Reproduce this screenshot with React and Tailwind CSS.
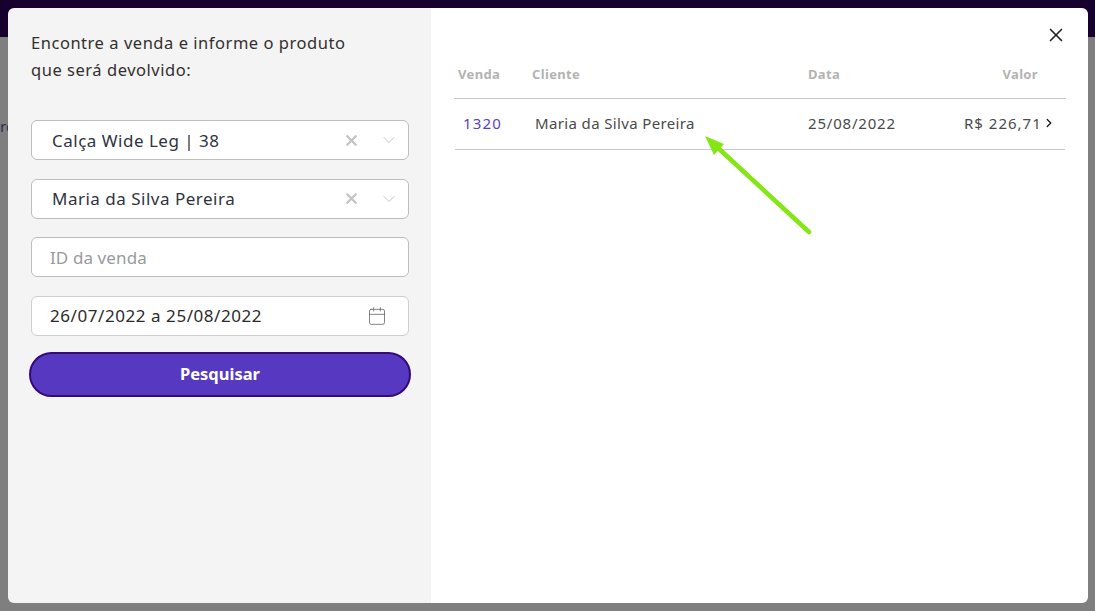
import { X, ChevronDown, ChevronRight, Calendar } from 'lucide-react'

const font = { fontFamily: '"Noto Sans", "Lato", sans-serif' }

// Select with clear + chevron icons
function SelectBox({ value }) {
  return (
    <div className="flex h-10 items-center rounded-[6px] border border-[#bdbdbd] bg-white pl-[20px] pr-[9px]">
      <span className="flex-1 text-[17px] leading-none tracking-[0.5px] text-[#2f3340]">{value}</span>
      <X size={17} strokeWidth={3.4} className="mr-[19px] text-[#c4c4c4]" />
      <ChevronDown size={20} strokeWidth={1.2} className="text-[#c4c4c4]" />
    </div>
  )
}

function Filters() {
  return (
    <aside className="w-[423px] shrink-0 bg-[#f4f4f4] pl-[23px] pr-[22px] pt-[21px]">
      <p className="text-[16.5px] leading-[27px] tracking-[0.53px] text-[#33302e]">
        Encontre a venda e informe o produto
        <br />
        que será devolvido:
      </p>
      <div className="mt-[37px] flex flex-col gap-[18.67px]">
        <SelectBox value="Calça Wide Leg | 38" />
        <SelectBox value="Maria da Silva Pereira" />
        <div className="flex h-10 items-center rounded-[6px] border border-[#bdbdbd] bg-white pl-[18px] text-[17px] leading-none tracking-[0.1px] text-[#9a9a9a]">
          ID da venda
        </div>
        <div className="flex h-10 items-center justify-between rounded-[6px] border border-[#cfcfcf] bg-white pl-[18px] pr-[21px] text-[17px] leading-none tracking-[0.56px] text-[#2b2b2b]">
          <span>26/07/2022 a 25/08/2022</span>
          <Calendar size={20} strokeWidth={1} className="text-[#6b6b6b]" />
        </div>
      </div>
      <button className="-mx-[2px] mt-[16px] block h-[45px] w-[382px] rounded-full border-2 border-[#36087a] bg-[#5639c0] text-[16.5px] font-bold text-white">
        Pesquisar
      </button>
    </aside>
  )
}

function SalesTable() {
  return (
    <section className="relative flex-1 bg-white">
      <button className="absolute right-[21px] top-[16px] text-[#222]">
        <X size={22} strokeWidth={1.8} />
      </button>
      <div className="ml-[23px] mr-[22px] pt-[57px]">
        <div className="flex h-[34px] items-start border-b border-[#c9c9c9] text-[13px] font-bold tracking-[0.35px] text-[#b3b3b3]">
          <span className="w-[75px] pl-[4px]">Venda</span>
          <span className="w-[275px] pl-[3px]">Cliente</span>
          <span className="w-[130px] pl-[4px]">Data</span>
          <span className="w-[104px] text-right">Valor</span>
        </div>
        <div className="mx-[1px] flex h-[51px] items-center border-b border-[#c9c9c9] pb-[2px] text-[15px] text-[#4a4a4a]">
          <span className="w-[80px] pl-[8px] tracking-[1.2px] text-[#5a3fcb]">1320</span>
          <span className="w-[273px] tracking-[0.36px]">Maria da Silva Pereira</span>
          <span className="w-[156px] tracking-[0.8px]">25/08/2022</span>
          <span className="w-[80px] whitespace-nowrap tracking-[1px]">R$ 226,71</span>
          <ChevronRight size={14} strokeWidth={2.4} className="-ml-[2px] text-[#222]" />
        </div>
      </div>
    </section>
  )
}

export default function App() {
  return (
    <div className="relative h-[611px] w-[1095px] overflow-hidden bg-[#7f7f7f]" style={font}>
      <div className="h-[37px] bg-[#16002e]" />
      <p className="mt-[78px] text-[15px] text-[#22304a]">ro</p>

      {/* modal sits on top of the dimmed page */}
      <div className="absolute left-[8px] top-[8px] flex h-[595px] w-[1080px] overflow-hidden rounded-[6px]">
        <Filters />
        <SalesTable />
      </div>

      {/* annotation arrow */}
      <svg className="absolute left-[695px] top-[130px]" width="125" height="110" viewBox="0 0 125 110">
        <path d="M114 102 L22 17" stroke="#84e614" strokeWidth="4.6" strokeLinecap="round" fill="none" />
        <path d="M10 6 L29 14 L19 25 Z" fill="#84e614" />
      </svg>
    </div>
  )
}
